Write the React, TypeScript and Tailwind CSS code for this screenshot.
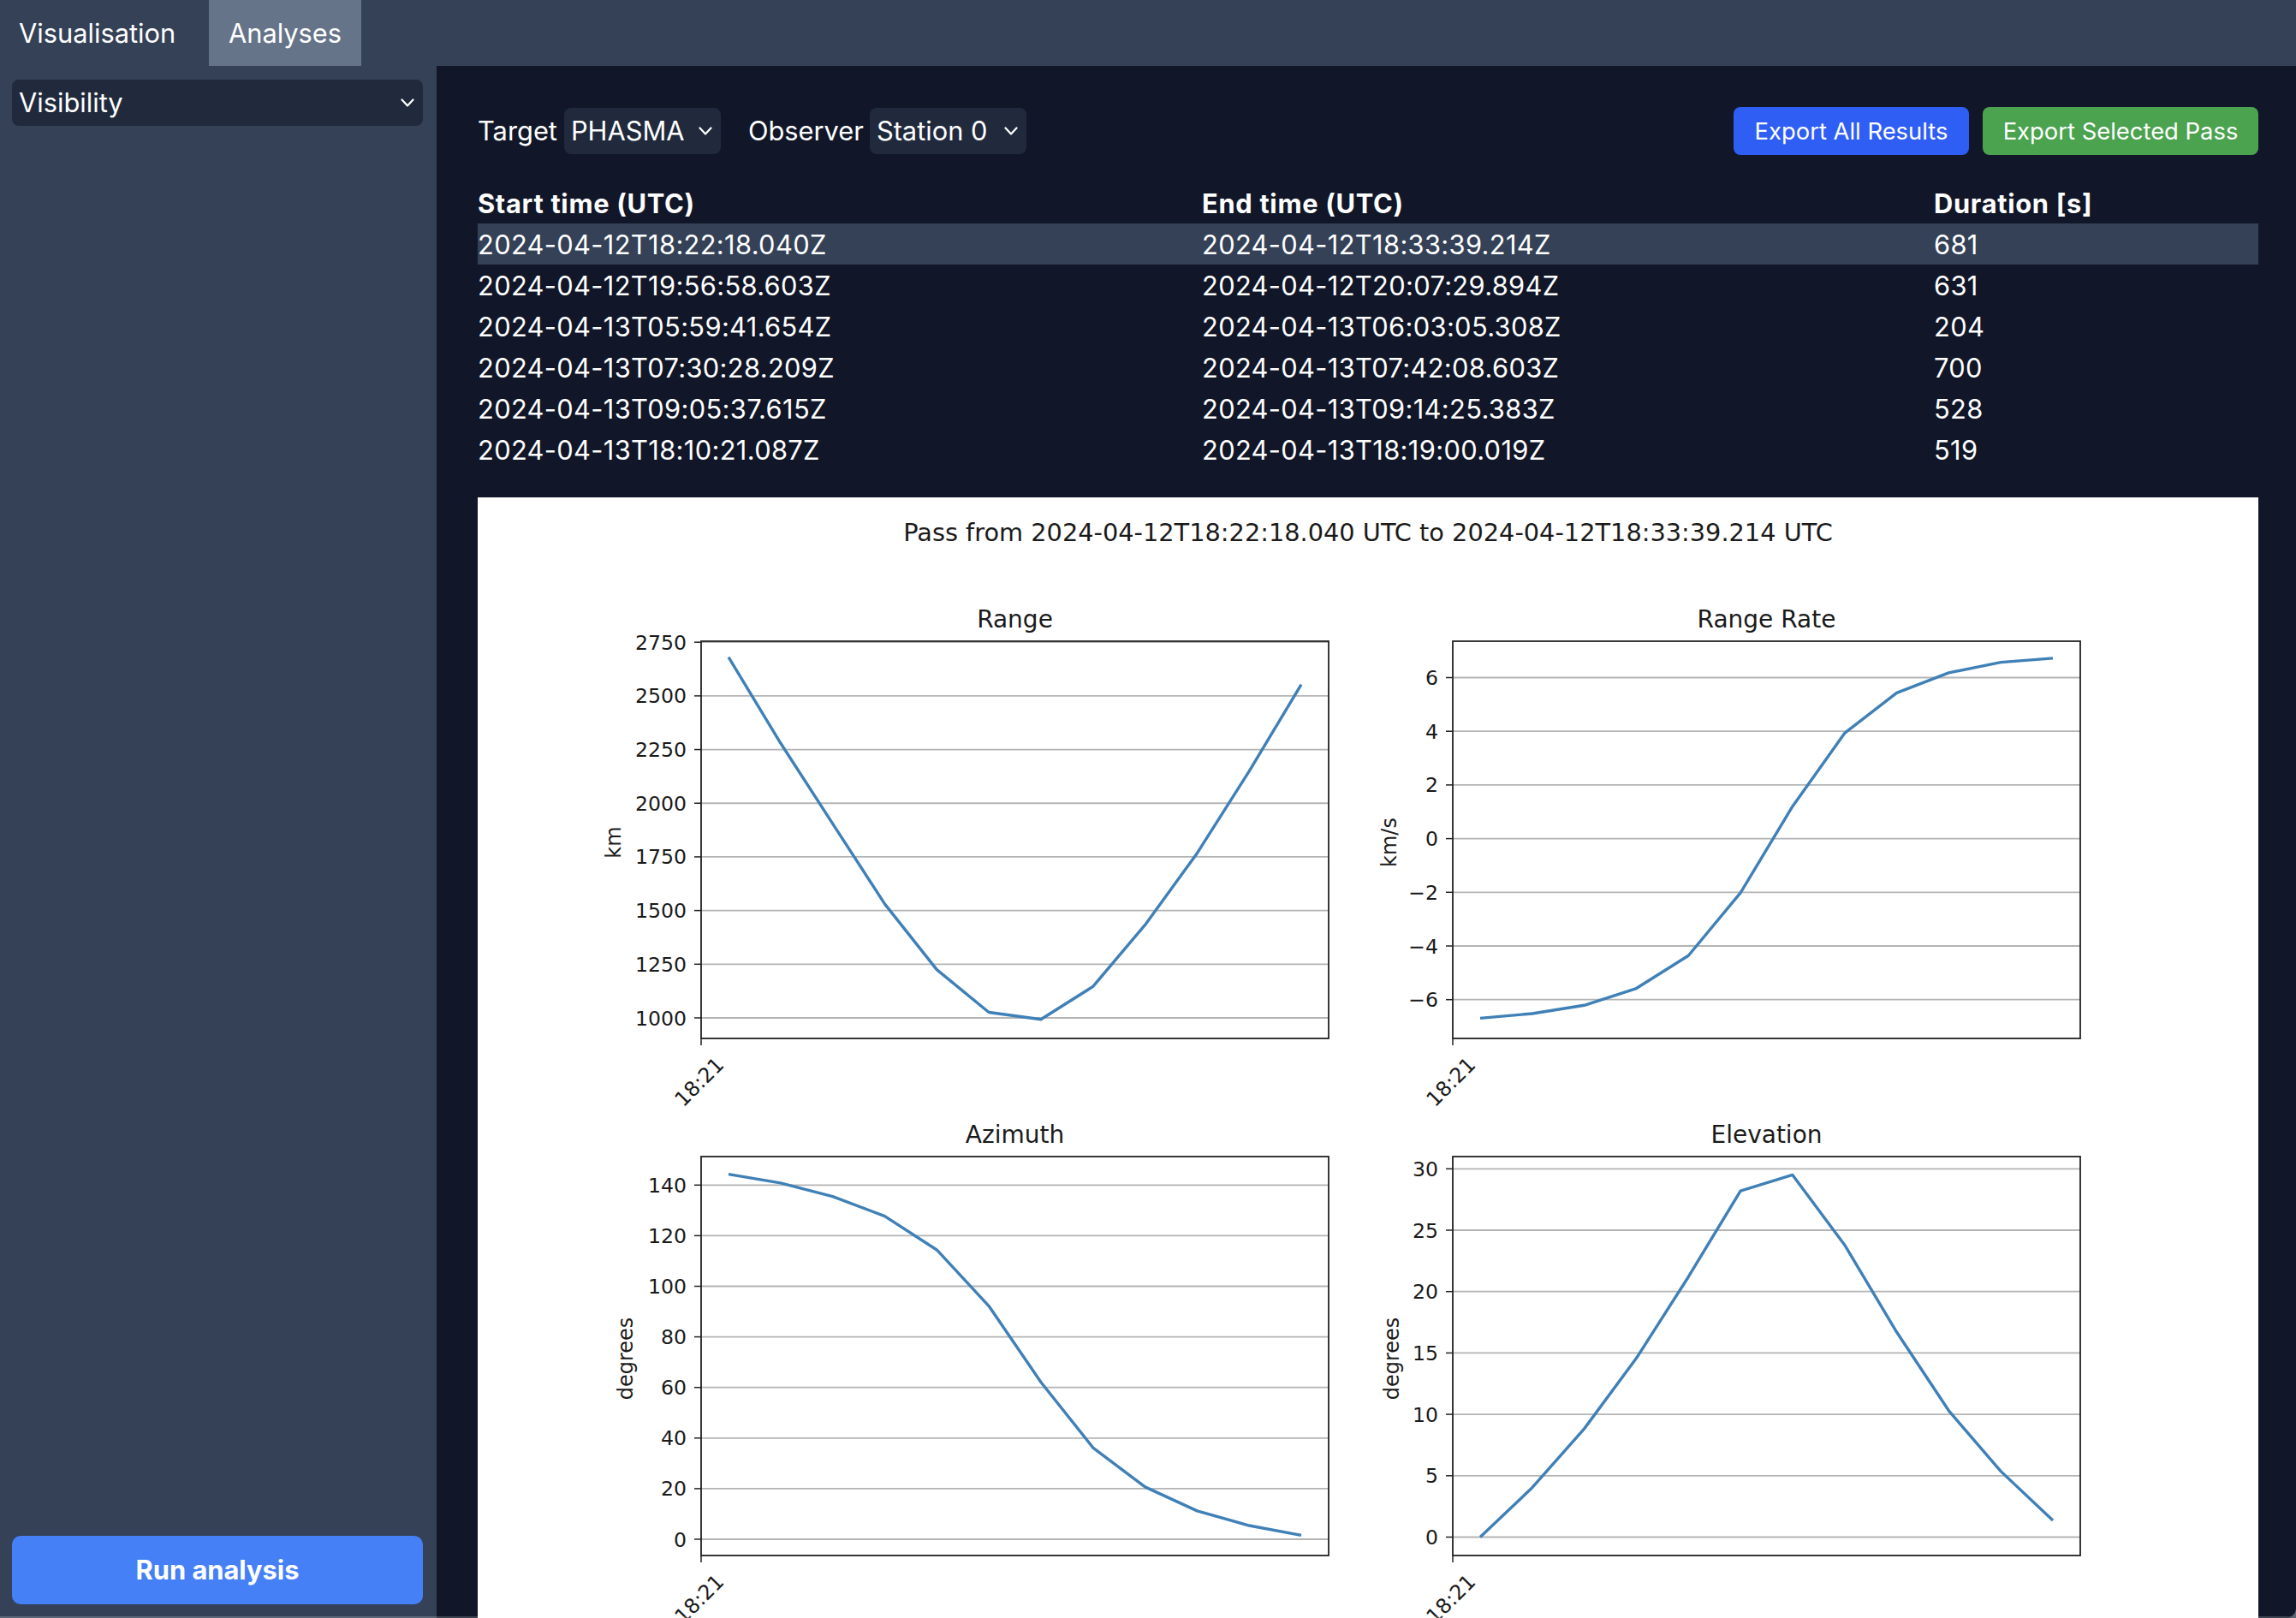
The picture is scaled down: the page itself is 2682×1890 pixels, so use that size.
import React from 'react';

const rows = [
  ['2024-04-12T18:22:18.040Z', '2024-04-12T18:33:39.214Z', '681'],
  ['2024-04-12T19:56:58.603Z', '2024-04-12T20:07:29.894Z', '631'],
  ['2024-04-13T05:59:41.654Z', '2024-04-13T06:03:05.308Z', '204'],
  ['2024-04-13T07:30:28.209Z', '2024-04-13T07:42:08.603Z', '700'],
  ['2024-04-13T09:05:37.615Z', '2024-04-13T09:14:25.383Z', '528'],
  ['2024-04-13T18:10:21.087Z', '2024-04-13T18:19:00.019Z', '519'],
];

// positions are relative to the plot image, whose corner is at 558,581 on the page
const plots = [
  {
    title: 'Range', unit: 'km', left: 261, top: 168, bottom: 632, labelX: 167,
    firstY: 608, tick: 250, tickPx: 62.69, base: 1000,
    ticks: ['1000', '1250', '1500', '1750', '2000', '2250', '2500', '2750'],
    data: [2680, 2280, 1905, 1531, 1225, 1026, 993, 1146, 1433, 1767, 2149, 2553],
  },
  {
    title: 'Range Rate', unit: 'km/s', left: 1139, top: 168, bottom: 632, labelX: 1073,
    firstY: 586.7, tick: 2, tickPx: 62.7, base: -6,
    ticks: ['\u22126', '\u22124', '\u22122', '0', '2', '4', '6'],
    data: [-6.69, -6.52, -6.21, -5.58, -4.36, -2.02, 1.2, 3.93, 5.43, 6.18, 6.57, 6.72],
  },
  {
    title: 'Azimuth', unit: 'degrees', left: 261, top: 770, bottom: 1236, labelX: 181,
    firstY: 1217, tick: 20, tickPx: 59.1, base: 0,
    ticks: ['0', '20', '40', '60', '80', '100', '120', '140'],
    data: [144.3, 140.8, 135.5, 127.7, 114.4, 92.2, 62.1, 36.2, 20.7, 11.2, 5.4, 1.55],
  },
  {
    title: 'Elevation', unit: 'degrees', left: 1139, top: 770, bottom: 1236, labelX: 1076,
    firstY: 1214.5, tick: 5, tickPx: 71.7, base: 0,
    ticks: ['0', '5', '10', '15', '20', '25', '30'],
    data: [0, 4.03, 8.83, 14.57, 21.2, 28.2, 29.5, 23.8, 16.7, 10.3, 5.36, 1.36],
  },
];

const plotWidth = 733;

function Plot({ p }: { p: (typeof plots)[number] }) {
  const yOf = (v: number) => p.firstY - ((v - p.base) / p.tick) * p.tickPx;
  const step = (plotWidth - 64) / 11;
  const line = p.data.map((v, i) => `${p.left + 32 + i * step},${yOf(v)}`).join(' ');
  const midX = p.left + plotWidth / 2;
  const midY = (p.top + p.bottom) / 2;

  return (
    <g>
      <text x={midX} y={p.top - 16} textAnchor="middle" fontSize={28} fill="#1a1a1a">{p.title}</text>
      {p.ticks.map((t, i) => {
        const y = p.firstY - i * p.tickPx;
        return (
          <g key={t}>
            <line x1={p.left} x2={p.left + plotWidth} y1={y} y2={y} stroke="#b4b4b4" strokeWidth={1.8} />
            <line x1={p.left - 8} x2={p.left} y1={y} y2={y} stroke="#222" strokeWidth={1.5} />
            <text x={p.left - 17} y={y + 8.5} textAnchor="end" fontSize={23.6} fill="#1a1a1a">{t}</text>
          </g>
        );
      })}
      <polyline points={line} fill="none" stroke="#3f80b6" strokeWidth={3.4} strokeLinejoin="round" />
      <rect x={p.left} y={p.top} width={plotWidth} height={p.bottom - p.top} fill="none" stroke="#222" strokeWidth={1.8} />
      <line x1={p.left} x2={p.left} y1={p.bottom} y2={p.bottom + 8} stroke="#222" strokeWidth={1.5} />
      <text
        x={p.labelX}
        y={midY + 3}
        textAnchor="middle"
        fontSize={24}
        fill="#1a1a1a"
        transform={`rotate(-90 ${p.labelX} ${midY + 3})`}
      >
        {p.unit}
      </text>
      <text
        x={p.left - 2}
        y={p.bottom + 59}
        textAnchor="middle"
        fontSize={24}
        fill="#1a1a1a"
        transform={`rotate(-45 ${p.left - 2} ${p.bottom + 51})`}
      >
        18:21
      </text>
    </g>
  );
}

function Chevron({ className }: { className?: string }) {
  return (
    <svg viewBox="0 0 16 10" className={className} fill="none" stroke="currentColor" strokeWidth={2.2} strokeLinecap="round" strokeLinejoin="round">
      <polyline points="1.5,1.5 8,8.5 14.5,1.5" />
    </svg>
  );
}

function Picker({ value, width }: { value: string; width: string }) {
  return (
    <div className={`flex h-[54px] items-center justify-between rounded-[8px] bg-[#202a3c] pl-[8px] pr-[10px] ${width}`}>
      <span>{value}</span>
      <Chevron className="h-[10px] w-[16px]" />
    </div>
  );
}

export default function App() {
  return (
    <div className="h-[1890px] w-[2682px] bg-[#5c6472]">
      <div className="relative flex h-full w-full flex-col overflow-hidden rounded-br-[12px] bg-[#344156] font-['Inter',sans-serif] text-[30.8px] leading-[48px] text-white">
        {/* Top tabs */}
        <div className="flex h-[77px] shrink-0">
          <div className="flex w-[244px] items-center pl-[22px]">Visualisation</div>
          <div className="flex w-[178px] items-center justify-center bg-[#667489]">Analyses</div>
        </div>

        <div className="flex min-h-0 flex-1">
          {/* Sidebar */}
          <aside className="flex w-[510px] shrink-0 flex-col justify-between pb-[16px] pl-[14px] pr-[16px] pt-[16px]">
            <Picker value="Visibility" width="w-full" />
            <button className="h-[80px] w-full rounded-[10px] bg-[#4580f7] font-bold">Run analysis</button>
          </aside>

          {/* Results */}
          <main className="min-w-0 flex-1 bg-[#111728] pl-[48px] pr-[44px] pt-[48px]">
            <div className="flex items-center justify-between">
              <div className="flex items-center">
                <span>Target</span>
                <div className="ml-[8px]"><Picker value="PHASMA" width="w-[183px]" /></div>
                <span className="ml-[32px]">Observer</span>
                <div className="ml-[7px]"><Picker value="Station 0" width="w-[183px]" /></div>
              </div>
              <div className="flex gap-[16px] text-[27.4px]">
                <button className="h-[56px] w-[275px] rounded-[8px] bg-[#2f5ef5]">Export All Results</button>
                <button className="h-[56px] w-[322px] rounded-[8px] bg-[#4ba34f]">Export Selected Pass</button>
              </div>
            </div>

            <table className="mt-[32px] w-full table-fixed text-left leading-[47px]">
              <colgroup>
                <col className="w-[846px]" />
                <col className="w-[855px]" />
                <col />
              </colgroup>
              <thead>
                <tr className="h-[48px] font-bold tracking-[0.7px]">
                  <th className="pt-[1px]">Start time (UTC)</th>
                  <th className="pt-[1px]">End time (UTC)</th>
                  <th className="pt-[1px]">Duration [s]</th>
                </tr>
              </thead>
              <tbody>
                {rows.map((r, i) => (
                  <tr key={r[0]} className={i === 0 ? 'h-[48px] bg-[#344156] tracking-[0.35px]' : 'h-[48px] tracking-[0.35px]'}>
                    <td className="pt-[1px]">{r[0]}</td>
                    <td className="pt-[1px]">{r[1]}</td>
                    <td className="pt-[1px]">{r[2]}</td>
                  </tr>
                ))}
              </tbody>
            </table>

            <div className="mt-[32px] h-[1400px] bg-white">
              <svg viewBox="0 0 2080 1400" className="block h-[1400px] w-[2080px] font-['DejaVu_Sans',sans-serif]">
                <text x={1040} y={51} textAnchor="middle" fontSize={28.8} fill="#1a1a1a">
                  Pass from 2024-04-12T18:22:18.040 UTC to 2024-04-12T18:33:39.214 UTC
                </text>
                {plots.map((p) => (
                  <Plot key={p.title} p={p} />
                ))}
              </svg>
            </div>
          </main>
        </div>

        {/* thin light edge along the bottom of the window */}
        <div className="absolute inset-x-0 bottom-0 h-[2px] bg-white/20" />
      </div>
    </div>
  );
}
